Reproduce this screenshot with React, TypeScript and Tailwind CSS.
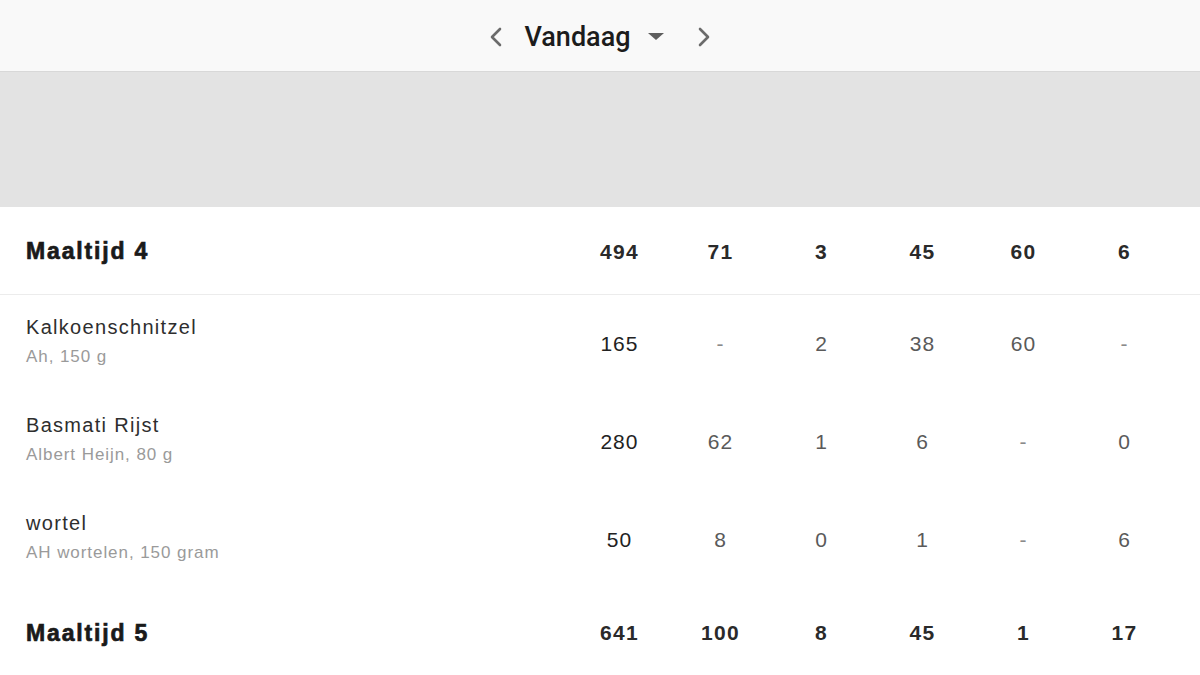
import React from "react";

type Item = {
  name: string;
  sub: string;
  values: string[];
};

const meal4 = ["494", "71", "3", "45", "60", "6"];
const meal5 = ["641", "100", "8", "45", "1", "17"];

const items: Item[] = [
  { name: "Kalkoenschnitzel", sub: "Ah, 150 g", values: ["165", "-", "2", "38", "60", "-"] },
  { name: "Basmati Rijst", sub: "Albert Heijn, 80 g", values: ["280", "62", "1", "6", "-", "0"] },
  { name: "wortel", sub: "AH wortelen, 150 gram", values: ["50", "8", "0", "1", "-", "6"] },
];

const font = { fontFamily: '"Liberation Sans", Arial, sans-serif' };

function Chevron({ dir }: { dir: "left" | "right" }) {
  return (
    <svg width="14" height="20" viewBox="0 0 14 20" fill="none">
      <path
        d={dir === "left" ? "M11 2 L3 10 L11 18" : "M3 2 L11 10 L3 18"}
        stroke="#6b6b6b"
        strokeWidth="2.6"
        strokeLinecap="round"
        strokeLinejoin="round"
      />
    </svg>
  );
}

function MealRow({ title, values, border }: { title: string; values: string[]; border?: boolean }) {
  return (
    <div
      className={`flex items-center pl-[26px] pr-[25px] pt-[2px] ${
        border ? "h-[88px] border-b border-[#ececec]" : "h-[86px]"
      }`}
    >
      <div className="flex-1 text-[23px] font-bold tracking-[0.08em] text-[#1a1a1a] [-webkit-text-stroke:0.7px_#1a1a1a]">
        {title}
      </div>
      {values.map((v, i) => (
        <div key={i} className="w-[101px] text-center text-[21px] font-bold tracking-[0.06em] text-[#2a2a2a]">
          {v}
        </div>
      ))}
    </div>
  );
}

function ItemRow({ item }: { item: Item }) {
  return (
    <div className="flex h-[98px] items-center pl-[26px] pr-[25px]">
      <div className="flex flex-1 flex-col pb-[8px]">
        <span className="text-[20px] leading-[26px] tracking-[0.065em] text-[#2e2e2e]">{item.name}</span>
        <span className="mt-[7px] text-[17px] leading-[20px] tracking-[0.055em] text-[#9a9a9a]">{item.sub}</span>
      </div>
      {item.values.map((v, i) => (
        <div
          key={i}
          className={`w-[101px] text-center text-[21px] tracking-[0.05em] ${
            i === 0 ? "text-[#222222]" : v === "-" ? "text-[#8a8a8a]" : "text-[#5a5a5a]"
          }`}
        >
          {v}
        </div>
      ))}
    </div>
  );
}

export default function App() {
  return (
    <div className="h-[675px] w-[1200px] overflow-hidden bg-white" style={font}>
      <header className="flex h-[72px] items-center justify-center border-b border-[#d8d8d8] bg-[#f9f9f9] pt-[3px]">
        <div className="flex items-center" style={{ fontFamily: 'Roboto, "Liberation Sans", sans-serif' }}>
          <Chevron dir="left" />
          <span className="ml-[21px] text-[27px] font-medium text-[#1c1c1c]">Vandaag</span>
          <svg className="ml-[17px]" width="16" height="8" viewBox="0 0 16 8">
            <path d="M0 0 L16 0 L8 7 Z" fill="#5e5e5e" />
          </svg>
          <span className="ml-[33px]">
            <Chevron dir="right" />
          </span>
        </div>
      </header>
      <div className="h-[135px] bg-[#e3e3e3]" />
      <MealRow title="Maaltijd 4" values={meal4} border />
      {items.map((it) => (
        <ItemRow key={it.name} item={it} />
      ))}
      <MealRow title="Maaltijd 5" values={meal5} />
    </div>
  );
}
